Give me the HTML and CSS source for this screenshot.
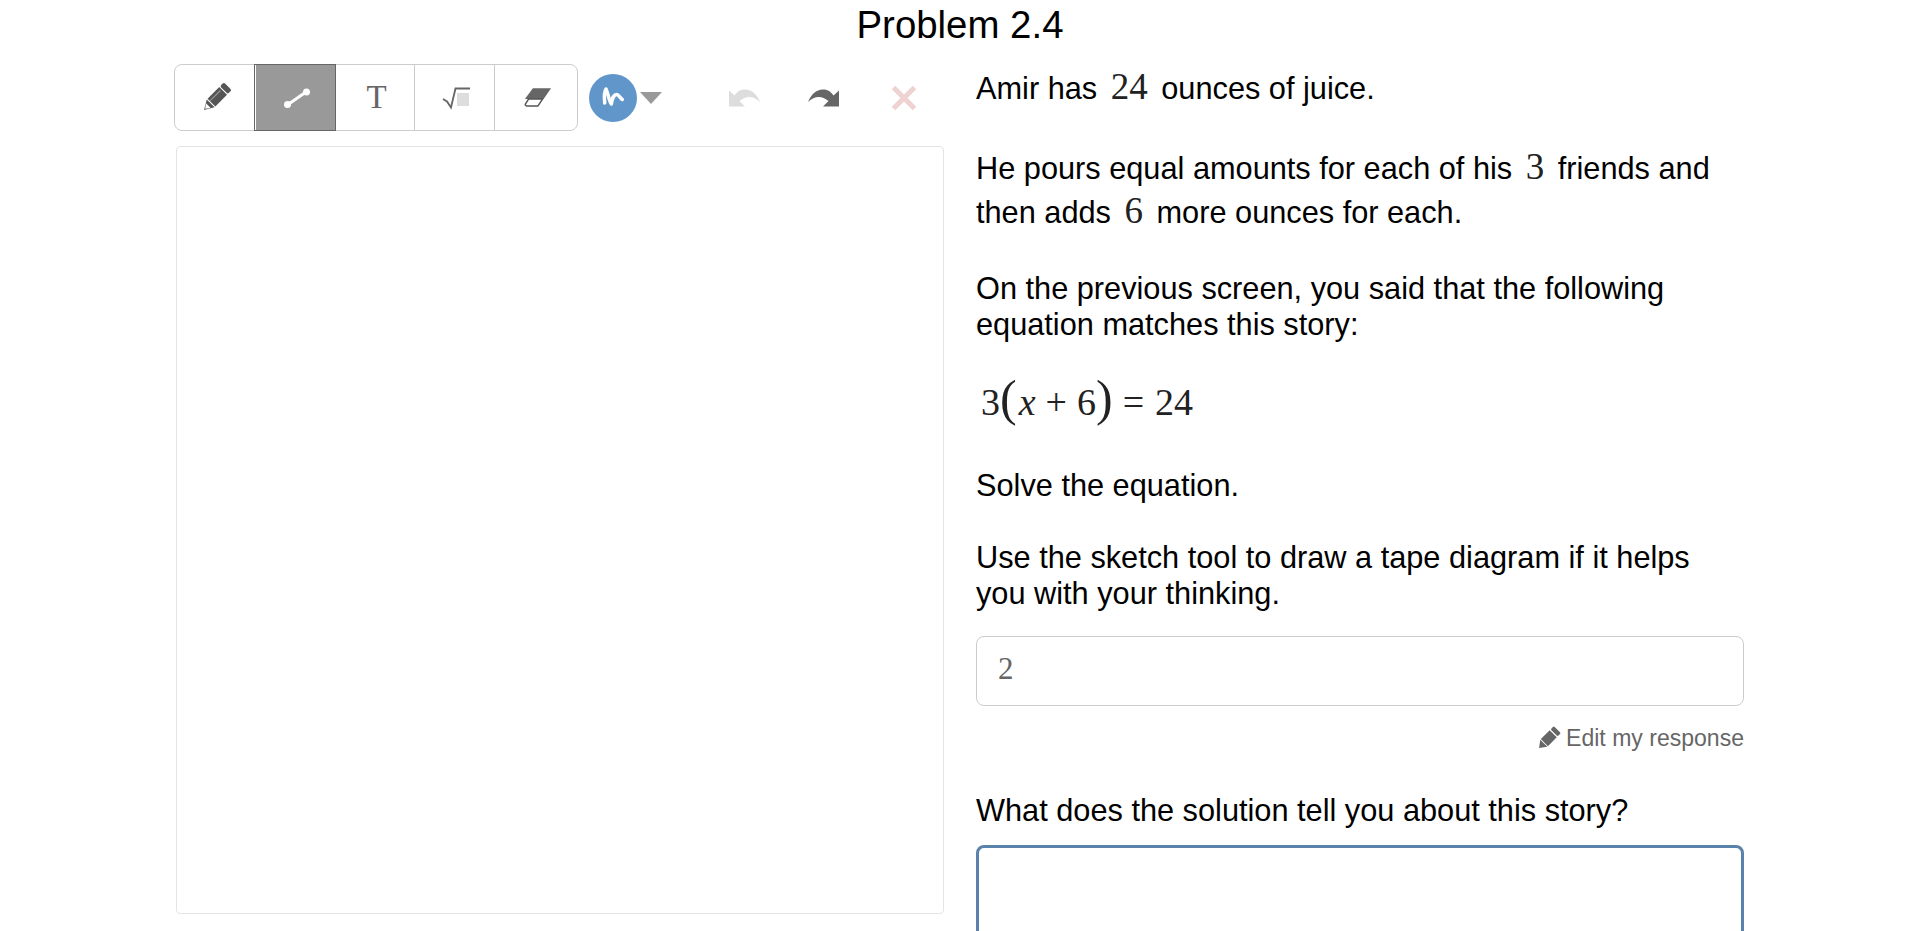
FILE: index.html
```html
<!DOCTYPE html>
<html lang="en">
  <head>
    <meta charset="UTF-8" />
    <meta name="viewport" content="width=device-width, initial-scale=1.0" />
    <title>Problem 2.4</title>
    <link rel="stylesheet" href="styles.css">
  </head>
  <body>
    <h1>Problem 2.4</h1>
    <div class="screen">
      <div class="sketch">
        <div class="tools">
          <div class="toolbar">
            <div class="tool">
              <svg width="33" height="33" viewBox="0 0 30 30"><g transform="rotate(45 15 15)" fill="#555"><rect x="10" y="0.5" width="10" height="5" rx="1.5"/><rect x="10" y="6.5" width="10" height="15"/><path d="M10 22.5h10l-5 8.5z"/><path d="M12 25.5h6l-3 4z" fill="#fff"/><path d="M13 8v13" stroke="#999" stroke-width="1"/></g></svg>
            </div>
            <div class="tool tool-active">
              <svg width="30" height="24" viewBox="0 0 30 24"><path d="M6 18.500L24 6" stroke="#fff" stroke-width="3"/><circle cx="5.500" cy="18.500" r="3.500" fill="#fff"/><circle cx="24.500" cy="6" r="3.500" fill="#fff"/></svg>
            </div>
            <div class="tool tool-text">T</div>
            <div class="tool">
              <svg width="30" height="24" viewBox="0 0 30 24"><path d="M2 13l4 2.500 4 6L14.500 2.500H29" fill="none" stroke="#666" stroke-width="1.800"/><rect x="16" y="7" width="12" height="13" fill="#ddd"/></svg>
            </div>
            <div class="tool tool-last">
              <svg width="28" height="21" viewBox="0 0 30 22"><path d="M9.500 1H29L21 12.500H1z" fill="#666"/><path d="M9 12.500H20L15 20H2.500q-1.500-.5-1-2L5 12.500z" fill="#fff" stroke="#555" stroke-width="1.600" stroke-linejoin="round"/></svg>
            </div>
          </div>
          <div class="pen-color">
            <svg width="48" height="48" viewBox="0 0 48 48"><path d="M15.700 29C15 22 15.500 17 17 15 19 19 20 27 22.300 30 23 25 25 20.500 27.500 20.500 30 20.500 31 24 33.300 25.500" fill="none" stroke="#fff" stroke-width="3.500" stroke-linecap="round" stroke-linejoin="round"/></svg>
          </div>
          <div class="caret"></div>
          <svg class="undo" width="32" height="18" viewBox="0 0 32 18"><path d="M1 1.500v16h16l-5.500-5.500C15 9.500 18 8 21 8c4.500 0 8 2 11 5C29 5.500 24 .5 17 .5 13 .5 9.500 2 6.500 6.500z" fill="#ddd"/></svg>
          <svg class="redo" width="32" height="18" viewBox="0 0 32 18"><path d="M31 1.500v16H15l5.500-5.500C17 9.500 14 8 11 8 6.500 8 3 10 0 13 3 5.500 8 .5 15 .5c4 0 7.500 1.500 10.500 6z" fill="#666"/></svg>
          <svg class="clear" width="26" height="26" viewBox="0 0 26 26"><path d="M2.500 2.500l21 21M23.500 2.500l-21 21" stroke="#efd2d2" stroke-width="5"/></svg>
        </div>
        <div class="canvas"></div>
      </div>
      <div class="prompt">
        <p class="first">Amir has <span class="math">24</span> ounces of juice.</p>
        <p class="story">He pours equal amounts for each of his <span class="math">3</span> friends and then adds <span class="math">6</span> more ounces for each.</p>
        <p class="previous">On the previous screen, you said that the following equation matches this story:</p>
        <div class="equation">3<span class="paren">(</span><i>x</i><span class="op">+</span>6<span class="paren">)</span><span class="op eq">=</span>24</div>
        <p class="solve">Solve the equation.</p>
        <p class="use">Use the sketch tool to draw a tape diagram if it helps you with your thinking.</p>
        <div class="answer">2</div>
        <div class="edit">
          <svg width="25" height="25" viewBox="0 0 30 30"><g transform="rotate(45 15 15)" fill="#666"><rect x="9" y="0" width="12" height="5.500" rx="1.500"/><rect x="9" y="7" width="12" height="15"/><path d="M9 23h12l-6 8z"/></g></svg>
          Edit my response
        </div>
        <p class="question">What does the solution tell you about this story?</p>
        <div class="response"></div>
      </div>
    </div>
  </body>
</html>
```

FILE: styles.css
```css
html,
body {
  height: 931px;
  overflow: hidden;
}
body {
  font-family: "Liberation Sans", Arial, sans-serif;
  margin: 0;
  color: #000;
  background-color: #fff;
}
h1 {
  font-size: 38.4px;
  font-weight: normal;
  line-height: 50px;
  margin: 0;
  text-align: center;
}
.screen {
  display: flex;
  gap: 32px;
  padding: 14px 0 0 174px;
}
.sketch {
  width: 770px;
}
.tools {
  display: flex;
  align-items: center;
  height: 67px;
}
.toolbar {
  display: flex;
  width: 404px;
  height: 67px;
  box-sizing: border-box;
  border: 1px solid #ccc;
  border-radius: 8px;
}
.tool {
  display: flex;
  align-items: center;
  justify-content: center;
  width: 80px;
  padding-left: 3px;
  box-sizing: border-box;
  border-left: 1px solid #ccc;
}
.tool:first-child {
  width: 79px;
  border-left: 0;
}
.tool-active {
  width: 82px;
  margin: -1px 0;
  background-color: #999;
  border: 1px solid #666;
  box-shadow: inset 1px 0 0 #fff;
}
.tool-text {
  width: 78px;
  border-left: 0;
  font-family: "Liberation Serif", serif;
  font-size: 33px;
  color: #666;
}
.tool-last {
  flex: 1;
}
.pen-color {
  width: 48px;
  height: 48px;
  margin-left: 11px;
  border-radius: 50%;
  background-color: #6096c9;
}
.pen-color svg {
  display: block;
}
.caret {
  width: 0;
  height: 0;
  margin: 0 0 0 3px;
  border-left: 11px solid transparent;
  border-right: 11px solid transparent;
  border-top: 12px solid #999;
}
.undo {
  margin-left: 66px;
}
.redo {
  margin-left: 48px;
}
.clear {
  margin-left: 51px;
}
.canvas {
  width: 768px;
  height: 768px;
  margin: 15px 0 0 2px;
  box-sizing: border-box;
  border: 1px solid #e4e4e4;
  border-radius: 4px;
}
.prompt {
  width: 768px;
  font-size: 30.72px;
  line-height: 36px;
}
.prompt p {
  margin: 0;
}
.first {
  padding-top: 5px;
}
.story {
  margin-top: 40px !important;
  line-height: 44px;
}
.math {
  font-family: "Liberation Serif", serif;
  font-size: 37px;
  line-height: 36px;
  padding: 0 5px;
  color: #222;
}
.previous {
  margin-top: 36px !important;
}
.equation {
  font-family: "Liberation Serif", serif;
  font-size: 38px;
  line-height: 44px;
  margin: 33px 0 0 5px;
  color: #222;
}
.equation i {
  margin-left: 2px;
}
.paren {
  font-size: 50px;
  line-height: 44px;
  font-weight: lighter;
}
.op {
  padding: 0 10px;
}
.eq {
  padding-right: 11px;
}
.solve {
  margin-top: 44px !important;
}
.use {
  margin-top: 36px !important;
}
.answer {
  height: 70px;
  margin-top: 24px;
  padding-left: 21px;
  box-sizing: border-box;
  border: 1px solid #ccc;
  border-radius: 8px;
  font-family: "Liberation Serif", serif;
  font-size: 31px;
  line-height: 64px;
  color: #666;
}
.edit {
  display: flex;
  align-items: center;
  justify-content: flex-end;
  gap: 5px;
  margin-top: 16px;
  font-size: 23.04px;
  line-height: 32px;
  color: #666;
}
.question {
  margin-top: 39px !important;
}
.response {
  height: 120px;
  margin-top: 16px;
  box-sizing: border-box;
  border: 3px solid #5a82aa;
  border-radius: 8px;
}
```
